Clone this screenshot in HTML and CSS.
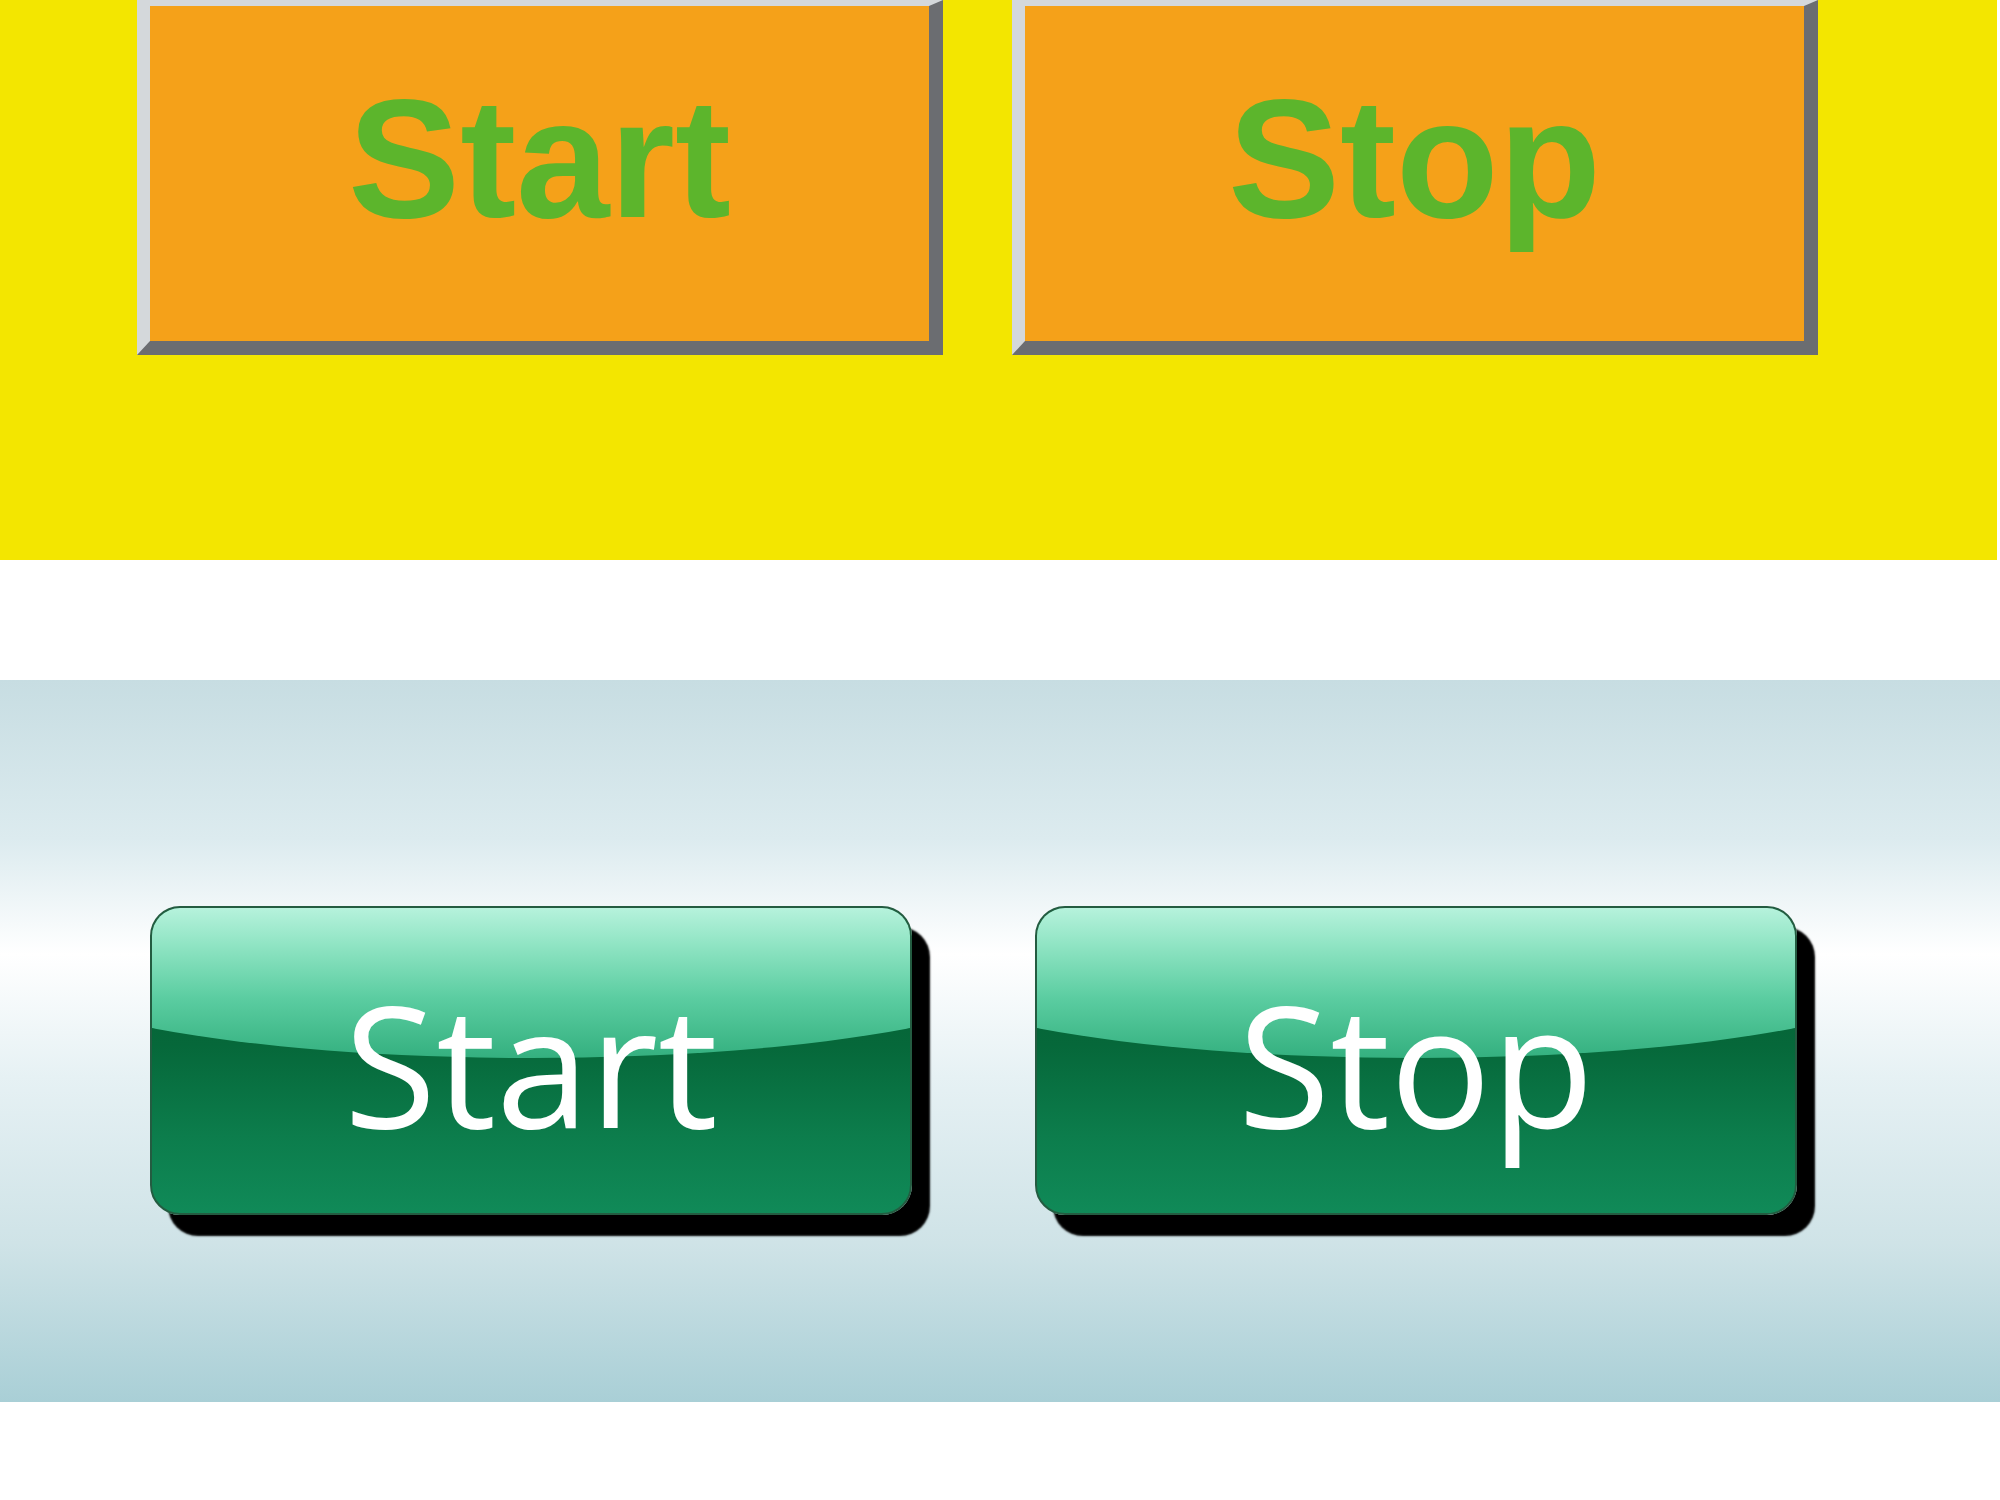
FILE: index.html
```html
<!DOCTYPE html>
<html lang="en">
	<head>
		<meta charset="UTF-8">
		<meta name="viewport" content="width=device-width, initial-scale=1.0">
		<title>Start / Stop Buttons</title>

		<link rel="stylesheet" href="styles.css">
	</head>
	<body>
		<!-- Flat orange buttons -->
		<div class="panel-yellow">
			<div class="btn-flat" role="button">Start</div>
			<div class="btn-flat" role="button">Stop</div>
		</div>

		<!-- Glossy green buttons -->
		<div class="panel-sky">
			<div class="btn-gloss" role="button"><span class="label">Start</span></div>
			<div class="btn-gloss" role="button"><span class="label">Stop</span></div>
		</div>
	</body>
</html>
```

FILE: styles.css
```css
body {
	margin: 0;
	background: #ffffff;
}

/* Top panel */
.panel-yellow {
	display: flex;
	align-items: flex-start;
	gap: 69px;
	width: 1997px;
	height: 560px;
	padding-left: 137px;
	box-sizing: border-box;
	background: #f3e600;
}

.btn-flat {
	width: 806px;
	height: 355px;
	box-sizing: border-box;
	padding-top: 70px;
	border-style: solid;
	border-width: 6px 14px 14px 13px;
	border-color: #d4d8db #6b6d71 #6b6d71 #d4d8db;
	background: #f5a119;
	color: #5cb52c;
	font-family: "Liberation Sans", Arial, sans-serif;
	font-weight: bold;
	font-size: 168px;
	line-height: 166px;
	text-align: center;
	cursor: pointer;
}

/* Bottom panel */
.panel-sky {
	display: flex;
	align-items: flex-start;
	gap: 123px;
	width: 2000px;
	height: 722px;
	margin-top: 120px;
	padding: 226px 0 0 150px;
	box-sizing: border-box;
	background: linear-gradient(#c7dde2 0%, #dcebef 22%, #ffffff 38%, #e6f1f4 55%, #cfe3e7 78%, #a9cfd6 100%);
}

.btn-gloss {
	position: relative;
	width: 762px;
	height: 309px;
	box-sizing: border-box;
	padding-top: 72px;
	border: 2px solid #245c41;
	border-radius: 30px;
	background: linear-gradient(#045f33 0%, #06683a 45%, #0c7d4c 75%, #108a58 100%);
	box-shadow: 18px 21px 2px #000000;
	overflow: hidden;
	color: #ffffff;
	font-family: "Open Sans", "DejaVu Sans", sans-serif;
	font-size: 168px;
	line-height: 166px;
	text-align: center;
	cursor: pointer;
}

/* glossy highlight, wider than the button so its lower edge curves gently */
.btn-gloss::before {
	content: "";
	position: absolute;
	top: 0;
	left: -20%;
	right: -20%;
	height: 150px;
	border-radius: 0 0 50% 50% / 0 0 100px 100px;
	background: linear-gradient(#b6f2dc 0%, #8fe4c3 25%, #5bcda1 60%, #34b07f 100%);
}

.btn-gloss .label {
	position: relative;
}
```
